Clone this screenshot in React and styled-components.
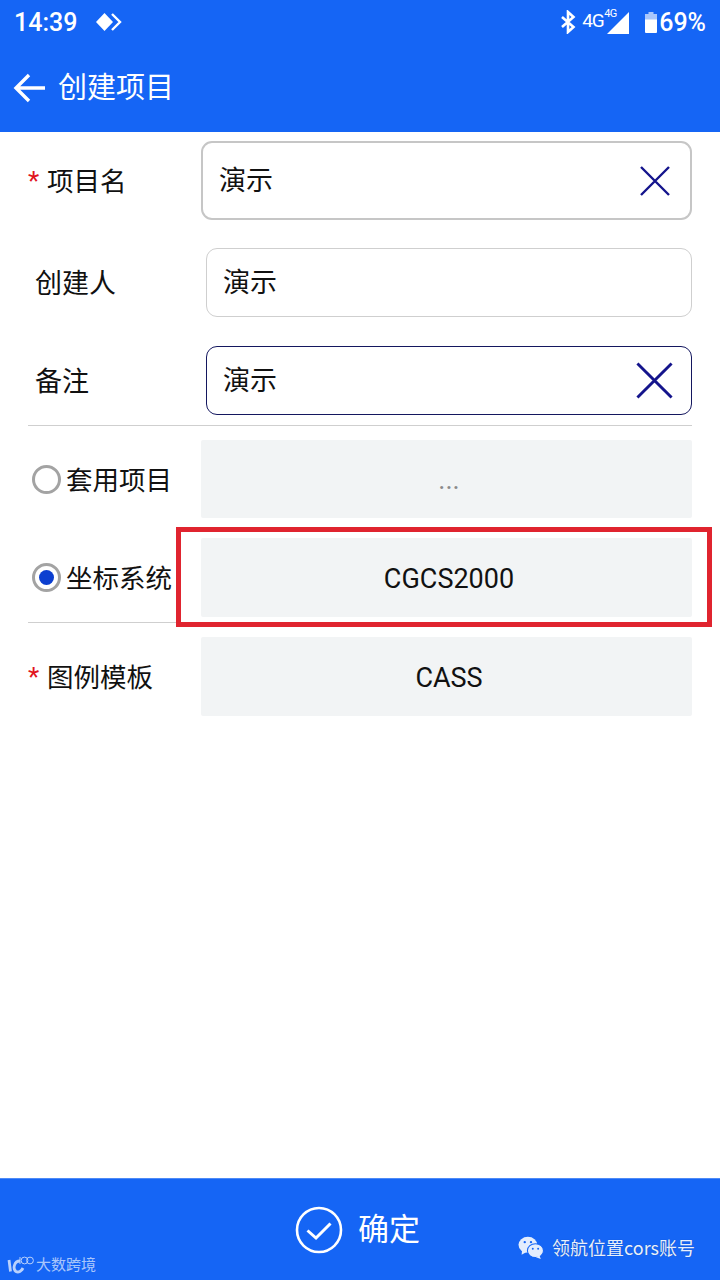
import React from "react";
import styled, { createGlobalStyle } from "styled-components";

const BLUE = "#1565f5";
const CJK = `Roboto, "Noto Sans CJK SC", sans-serif`;

const GlobalStyle = createGlobalStyle`
  html, body {
    margin: 0;
    padding: 0;
    background: #fff;
  }
  * {
    box-sizing: border-box;
  }
`;

export default function App() {
  return (
    <Page>
      <GlobalStyle />
      <Header>
        <StatusBar>
          <StatusLeft>
            <Clock>14:39</Clock>
            <svg width="27" height="20" viewBox="0 0 27 20">
              <path d="M9.500 1 18 10 9.500 19 1 10Z" fill="#fff" />
              <path d="M17 2 25 10 17 18" fill="none" stroke="#fff" strokeWidth="2.400" />
            </svg>
          </StatusLeft>
          <StatusRight>
            <svg width="16" height="24" viewBox="0 0 16 24">
              <path d="M2 7 13.500 17 8 22V2l5.500 5L2 17" fill="none" stroke="#fff" strokeWidth="2.600" />
            </svg>
            <NetworkGroup>
              <Network>4G</Network>
              <NetworkSmall>4G</NetworkSmall>
              <svg width="22" height="22" viewBox="0 0 22 22">
                <path d="M22 0V22H0Z" fill="#fff" />
              </svg>
            </NetworkGroup>
            <svg width="14" height="24" viewBox="0 0 14 24">
              <path d="M4.500 2h5v2h3.500v6H1V4h3.500Z" fill="#a9c6fb" />
              <path d="M1 9.500h12v12.500a1 1 0 0 1-1 1H2a1 1 0 0 1-1-1Z" fill="#fff" />
            </svg>
            <Battery>69%</Battery>
          </StatusRight>
        </StatusBar>
        <TitleBar>
          <svg width="34" height="32" viewBox="0 0 34 32">
            <path d="M32 16H3M16 3 3 16l13 13" fill="none" stroke="#fff" strokeWidth="3.400" />
          </svg>
          <Title>创建项目</Title>
        </TitleBar>
      </Header>

      <Form>
        <Row $top={9}>
          <RequiredLabel><Star>*</Star><LabelText>项目名</LabelText></RequiredLabel>
          <Input $kind="strong" $height={79} $right={19}>
            <InputText>演示</InputText>
            <ClearIcon size={32} />
          </Input>
        </Row>
        <Row $top={28}>
          <PlainLabel><LabelText>创建人</LabelText></PlainLabel>
          <Input $height={69}>
            <InputText>演示</InputText>
          </Input>
        </Row>
        <Row $top={29}>
          <PlainLabel><LabelText>备注</LabelText></PlainLabel>
          <Input $kind="focus" $height={69} $right={17}>
            <InputText>演示</InputText>
            <ClearIcon size={39} />
          </Input>
        </Row>
        <Divider $top={10} />
        <Row $top={14}>
          <RadioLabel><Radio /><LabelText>套用项目</LabelText></RadioLabel>
          <SelectBox $height={78} $muted>...</SelectBox>
        </Row>
        <Row $top={20}>
          <RadioLabel><Radio $checked /><LabelText>坐标系统</LabelText></RadioLabel>
          <SelectBox $height={79}>CGCS2000</SelectBox>
        </Row>
        <Divider $top={5} />
        <Row $top={14}>
          <RequiredLabel><Star>*</Star><LabelText>图例模板</LabelText></RequiredLabel>
          <SelectBox $height={79}>CASS</SelectBox>
        </Row>
      </Form>

      <Highlight />

      <Footer>
        <svg width="48" height="48" viewBox="0 0 48 48">
          <circle cx="24" cy="24" r="22" fill="none" stroke="#fff" strokeWidth="2.600" />
          <path d="M12.500 24.500 21 32 35.500 17.500" fill="none" stroke="#fff" strokeWidth="3" />
        </svg>
        <FooterText>确定</FooterText>
        <LeftMark>
          <svg width="27" height="18" viewBox="0 0 27 18" opacity="0.7">
            <path d="M2 4 3.500 15.500M13 5C7 5 5.500 13 9 15.500 11.500 17 14.500 15 16 12" fill="none" stroke="#fff" strokeWidth="2.800" />
            <path d="M13 1v7" fill="none" stroke="#fff" strokeWidth="1" />
            <circle cx="17.500" cy="4.500" r="3.400" fill="none" stroke="#fff" strokeWidth="1" />
            <circle cx="23" cy="4.500" r="3.400" fill="none" stroke="#fff" strokeWidth="1" />
          </svg>
          <span>大数跨境</span>
        </LeftMark>
        <RightMark>
          <svg width="28" height="25" viewBox="0 0 30 28">
            <ellipse cx="11.500" cy="11" rx="10.500" ry="9" fill="#e3edfd" />
            <path d="M5 17 4.500 22 10 19Z" fill="#e3edfd" />
            <ellipse cx="20" cy="17.500" rx="9" ry="7.800" fill="#e3edfd" stroke={BLUE} strokeWidth="1.200" />
            <path d="M24.500 23 26 27 20.500 25Z" fill="#e3edfd" />
            <circle cx="8" cy="8" r="1.300" fill={BLUE} />
            <circle cx="15" cy="8" r="1.300" fill={BLUE} />
            <circle cx="17" cy="15.500" r="1.100" fill={BLUE} />
            <circle cx="23" cy="15.500" r="1.100" fill={BLUE} />
          </svg>
          <span>领航位置cors账号</span>
        </RightMark>
      </Footer>
    </Page>
  );
}

function ClearIcon({ size }) {
  return (
    <ClearSvg width={size} height={size} viewBox="0 0 32 32">
      <path d="M2 2 30 30M30 2 2 30" fill="none" stroke="#14148c" strokeWidth="2.400" />
    </ClearSvg>
  );
}

// Styles
const Page = styled.div`
  position: relative;
  display: flex;
  flex-direction: column;
  width: 720px;
  height: 1280px;
  overflow: hidden;
  background: #fff;
  font-family: ${CJK};
  color: #111;
`;

const Header = styled.header`
  height: 132px;
  flex-shrink: 0;
  background: ${BLUE};
  color: #fff;
`;

const StatusBar = styled.div`
  display: flex;
  align-items: center;
  justify-content: space-between;
  height: 44px;
  padding: 0 14px;
`;

const StatusLeft = styled.div`
  display: flex;
  align-items: center;
  gap: 18px;
`;

const Clock = styled.span`
  font-family: Roboto, sans-serif;
  font-size: 25px;
  font-weight: 500;
`;

const StatusRight = styled.div`
  display: flex;
  align-items: center;
  gap: 7px;
`;

const NetworkGroup = styled.div`
  position: relative;
  display: flex;
  align-items: flex-end;
  justify-content: flex-end;
  width: 46px;
  height: 24px;
  margin-right: 8px;
`;

const Network = styled.span`
  position: absolute;
  left: -1px;
  top: 0;
  font-family: Roboto, sans-serif;
  font-size: 19px;
  letter-spacing: -1px;
  line-height: 22px;
`;

const NetworkSmall = styled.span`
  position: absolute;
  left: 21px;
  top: -2px;
  font-family: Roboto, sans-serif;
  font-size: 11px;
  letter-spacing: -0.5px;
  line-height: 12px;
`;

const Battery = styled.span`
  font-family: Roboto, sans-serif;
  font-size: 25px;
  font-weight: 500;
  margin-left: -6px;
`;

const TitleBar = styled.div`
  display: flex;
  align-items: center;
  gap: 11px;
  height: 88px;
  padding: 0 13px 1px;
`;

const Title = styled.span`
  font-size: 29px;
  line-height: 40px;
`;

const Form = styled.main`
  flex: 1;
  padding: 0 28px;
`;

const Row = styled.div`
  display: flex;
  align-items: center;
  justify-content: space-between;
  margin-top: ${(p) => p.$top}px;
`;

const RequiredLabel = styled.label`
  display: flex;
  align-items: center;
  font-size: 26.500px;
  line-height: 40px;
`;

const LabelText = styled.span`
  margin-top: 3px;
`;

const Star = styled.span`
  width: 19px;
  color: #e1141e;
  font-size: 26px;
`;

const PlainLabel = styled.label`
  display: flex;
  padding-left: 7px;
  font-size: 27px;
  line-height: 40px;
`;

const RadioLabel = styled.label`
  display: flex;
  align-items: center;
  gap: 5px;
  padding-left: 4px;
  font-size: 26.500px;
  line-height: 40px;
  white-space: nowrap;
`;

const Radio = styled.span`
  display: flex;
  align-items: center;
  justify-content: center;
  width: 29px;
  height: 29px;
  border: 3px solid #a3a3a3;
  border-radius: 50%;
  &::after {
    content: "";
    display: ${(p) => (p.$checked ? "block" : "none")};
    width: 15px;
    height: 15px;
    border-radius: 50%;
    background: #0c3fd0;
  }
`;

const Input = styled.div`
  display: flex;
  align-items: center;
  justify-content: space-between;
  width: ${(p) => (p.$kind === "strong" ? 491 : 486)}px;
  height: ${(p) => p.$height}px;
  padding-right: ${(p) => p.$right || 17}px;
  background: #fff;
  border-radius: 11px;
  border: ${(p) =>
    p.$kind === "strong"
      ? "2px solid #c6c6c6"
      : p.$kind === "focus"
      ? "1px solid #14175f"
      : "1px solid #cfcfcf"};
`;

const InputText = styled.span`
  padding: 1px 0 0 16px;
  font-size: 27px;
  line-height: 40px;
`;

const ClearSvg = styled.svg`
  flex-shrink: 0;
`;

const SelectBox = styled.div`
  display: flex;
  align-items: center;
  justify-content: center;
  width: 491px;
  height: ${(p) => p.$height}px;
  padding: 2px 0 0 5px;
  background: #f2f4f5;
  border-radius: 2px;
  font-family: Roboto, sans-serif;
  font-size: 27px;
  color: ${(p) => (p.$muted ? "#8a8a8a" : "#111")};
`;

const Divider = styled.hr`
  height: 1px;
  margin: ${(p) => p.$top}px 0 0;
  border: 0;
  background: #cfcfcf;
`;

const Highlight = styled.div`
  position: absolute;
  left: 176px;
  top: 527px;
  width: 536px;
  height: 100px;
  border: 5px solid #e0242f;
`;

const Footer = styled.footer`
  position: relative;
  display: flex;
  align-items: center;
  justify-content: center;
  gap: 15px;
  height: 102px;
  flex-shrink: 0;
  padding-right: 5px;
  background: ${BLUE};
  border-top: 1px solid #4d8af7;
`;

const FooterText = styled.span`
  font-size: 31px;
  line-height: 44px;
  color: #fff;
`;

const LeftMark = styled.div`
  position: absolute;
  left: 7px;
  bottom: 5px;
  display: flex;
  align-items: center;
  gap: 2px;
  font-size: 15px;
  line-height: 20px;
  color: rgba(255, 255, 255, 0.65);
`;

const RightMark = styled.div`
  position: absolute;
  right: 25px;
  bottom: 19px;
  display: flex;
  align-items: center;
  gap: 7px;
  font-family: "Noto Sans CJK SC", sans-serif;
  font-size: 18px;
  line-height: 28px;
  color: #e8f0fe;
  text-shadow: 0 0 1px rgba(0, 0, 0, 0.3);
`;
